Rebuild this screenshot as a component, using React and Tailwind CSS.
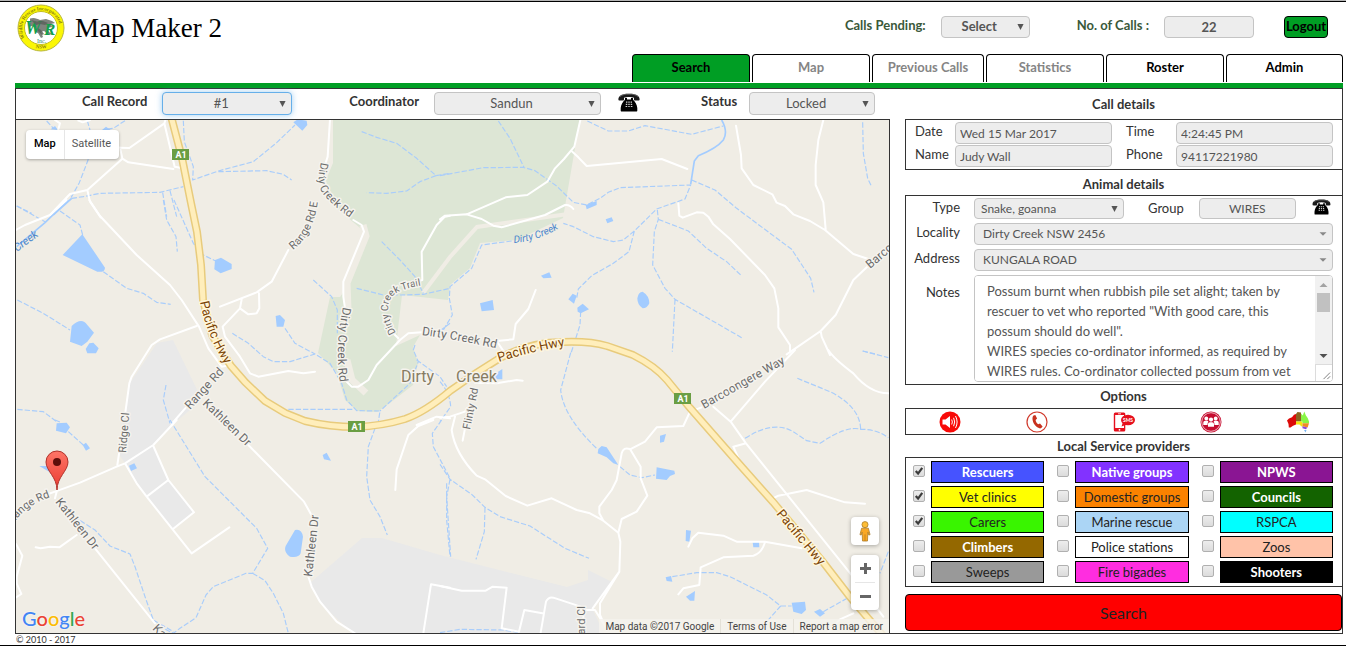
import React from "react";

const fieldBase =
  "rounded border border-[#c4c4c4] bg-[#ededed] text-[#555] outline-none";

function Picker({ id, label, value, wrapClass, textClass, triangle = "fill-[#555]", focused = false, wide = false }) {
  return (
    <div className={`relative ${wrapClass}`}>
      <select
        id={id}
        aria-label={label}
        defaultValue={value}
        className={`block h-full w-full appearance-none rounded border bg-[#ededed] text-[#555] outline-none ${textClass} ${
          focused ? "border-[#66afe9] shadow-[0_0_6px_rgba(102,175,233,0.6)]" : "border-[#c4c4c4]"
        }`}
      >
        <option>{value}</option>
      </select>
      <svg
        viewBox="0 0 8 8"
        preserveAspectRatio="none"
        className={`pointer-events-none absolute top-1/2 -translate-y-1/2 ${wide ? "right-1.5 h-1 w-2" : "right-1.5 h-[7px] w-[7px]"} ${triangle}`}
      >
        <path d="M0.5 0.5h7L4 7.5z" />
      </svg>
    </div>
  );
}

function PhoneIcon({ className }) {
  return (
    <svg viewBox="0 0 22 19" className={className} aria-hidden="true">
      <path d="M.4 6.6C.2 3.4 2.500.7 11 .7s10.800 2.700 10.600 5.900c0 .8-.4 1-1.200 1h-3.200c-.8 0-1.200-.3-1.200-1V4.800c-1.400-.6-3-.8-5-.8s-3.600.2-5 .8v1.800c0 .7-.4 1-1.200 1H1.600c-.8 0-1.200-.2-1.200-1z" fill="#1a1a1a" />
      <path d="M2 3.600C4.500 1.500 7 1.200 11 1.200s6.500.3 9 2.400" fill="none" stroke="#8b8b8b" strokeWidth=".6" />
      <path d="M7 5h2v1.600h4V5h2v1.800c2 1.700 4 4.600 4.300 8.200v2.400c0 .7-.3 1-1 1H3.700c-.7 0-1-.3-1-1V15C3 11.400 5 8.500 7 6.800z" fill="#000" />
      <g fill="#cfcfcf">
        <path d="M8 8.500h1.400v1.200H8zM10.300 8.500h1.400v1.200h-1.400zM12.600 8.500H14v1.200h-1.400zM7.800 10.700h1.500v1.200H7.800zM10.300 10.700h1.400v1.200h-1.400zM12.700 10.700h1.500v1.200h-1.500zM7.600 12.900h1.600v1.200H7.600zM10.300 12.900h1.400v1.200h-1.400zM12.800 12.900h1.600v1.200h-1.600z" />
      </g>
    </svg>
  );
}

function Logo() {
  return (
    <svg viewBox="0 0 48 48" className="h-12 w-12" role="img" aria-label="Wildlife Rescue Incorporated NSW">
      <defs>
        <path id="ringTop" d="M7.500 34A18.800 18.800 0 1 1 40.500 34" />
        <path id="ringBottom" d="M14 42A21 21 0 0 0 34 42" />
      </defs>
      <circle cx="24" cy="24" r="23" fill="#fbf705" stroke="#b9b73c" strokeWidth="1" />
      <circle cx="24" cy="24" r="16.500" fill="#fff" stroke="#c4bf1b" strokeWidth="1" />
      <g fill="#8b8210" fontFamily="Liberation Serif, serif" fontSize="5" fontWeight="bold">
        <text><textPath href="#ringTop">Wildlife Rescue Incorporated</textPath></text>
        <text><textPath href="#ringBottom" startOffset="5">NSW</textPath></text>
      </g>
      <path d="M13 14.500c4-1.500 7 0 10 1.500l6-1 6 2 3 2-4 1 1 3-5 1 2 4 3 2-3 1-5-4-3 1 2 5-2 1-3-5-3-1 1-4-4-2-3 1 1-3z" fill="#70766f" opacity=".9" />
      <g fill="#12a04c" fontFamily="Liberation Serif, serif" fontWeight="bold" fontStyle="italic">
        <text x="8" y="30" fontSize="18">W</text>
        <text x="27" y="31" fontSize="17">R</text>
      </g>
      <path d="M14 16l6 1.500 6-.5 5 2-3 2-5-1-4 1zM21 24l3 2 3 4-2 1-4-4z" fill="#5b625b" opacity=".85" />
      <text x="20" y="39" fontSize="6" fill="#2f8a67" fontFamily="Liberation Serif, serif">Inc.</text>
    </svg>
  );
}

/* Map geometry: tiles drawn on a 3x grid, each placed at its own origin. */
const tiles = [
  {
    at: "translate(0 0) scale(0.33333)",
    roads:
      "M175 388L180 370L165 360M270 360L248 367L235 362M357 443L388 444L493 370L497 358M493 370L524 500L541 503M360 443L367 476L385 487L520 507M367 476L262 570L210 582L150 645M262 570L270 605L302 652M990 358L983 470L976 492",
    creeks:
      "M140 363L160 385M262 362L270 390M375 362L340 385L318 388M265 478L238 548L212 595M215 595L250 590L300 580L480 577L550 560M488 578L500 650M510 572L530 650M550 362L553 425L580 500L578 540L655 513L760 485L830 428L885 375M655 515L800 512L850 523L875 540M1085 395L1130 412L1190 430L1250 475L1308 527L1350 520M1308 527L1260 545L1220 573L1160 580L1100 578M50 618L95 640",
    rivers: "M215 595L160 645",
    water: "M880 367L893 358L920 362L922 375L907 392zM306 390L318 380L332 390zM152 388L165 378L174 390z",
  },
  {
    at: "translate(0 200) scale(0.33333)",
    roads:
      "M268 0L300 48L410 165L510 255L545 300L597 380L625 445L665 500L690 495M48 90L75 75L150 45L200 0M590 378L480 418L455 435L395 530L388 550L375 645M660 320L770 277L815 245L865 150M725 298L720 325L745 343L770 340L778 325L777 280M720 325L668 380L675 410L720 470L750 520L775 530L865 513L910 520L945 515M1060 60L1085 75L1092 95L1030 245L1030 290L1035 325M1035 540L1055 560L1075 560L1105 540L1130 495L1200 420L1225 400L1265 397M1350 47L1335 50L1310 75L1265 155L1267 240L1250 245M1170 390L1195 415M515 672L560 620M1250 675L1310 650L1350 655",
    creeks:
      "M50 18L135 65M180 33L240 75L248 105M310 215L380 265L430 280L470 307L512 313M52 300L130 340L210 390M490 0L500 60L528 110L532 155M522 0L580 130L610 165L645 182M940 240L995 290L1012 330L1012 400M697 400L745 430L790 470L820 485L870 485L945 462L990 490L1025 550L1040 600L1070 632L1140 633L1135 665M855 385L885 430L945 462M865 628L1060 628M1145 125L1200 180L1245 230L1270 280M1070 265L1150 285L1200 285L1270 283L1350 265M1245 435L1240 450L1255 485L1230 550L1140 633M1250 480L1320 530L1340 560M1350 370L1310 400M52 628L130 635L170 665M498 555L490 600L510 670",
    rivers: "M205 0L135 68L50 140",
    water:
      "M247 103L188 165L292 215Q315 218 315 203zM643 208L645 180L663 173L695 192L695 207L662 220zM827 348L840 345L855 360L850 380L830 380zM215 378Q245 350 262 375L282 398L262 425L245 438L210 425zM257 447L268 430L280 428L296 445L288 460L262 460z",
  },
  {
    at: "translate(0 420) scale(0.33333)",
    roads:
      "M530 0L460 75L375 130L350 140L240 188L165 215L145 222M375 130L410 190L440 230L575 400L688 322M460 78L505 180L582 277L518 328M505 180L440 230M352 135L358 95M170 215L165 235M285 385L465 610M230 345L178 382L150 380L122 385L107 382M48 372L67 407L50 470L50 490L64 522L48 532M745 75L912 245L937 290M925 470L935 500L960 545L1010 605L1065 640M1300 0L1255 18L1225 45L1190 148L1186 210M1270 640L1293 493L1350 503",
    creeks:
      "M510 0L615 170L770 325L803 385L758 460L738 460L640 500L618 525L588 593L540 625L520 640L490 625M758 460L795 482L820 520L850 580L865 640M222 290L285 330L330 378L390 402L405 440L435 530L460 600L520 635M1125 25L1105 80L1100 170L1110 240L1140 290L1162 345M1325 0L1297 40L1300 80L1350 175M1340 190L1340 300L1350 410M205 35L250 75M165 0L185 8",
    rivers: "",
    water:
      "M170 10L200 8L210 22L198 40L168 32zM248 75L258 68L270 85L258 92zM118 138L140 138L152 158zM387 137L403 130L411 145L393 153zM968 105L980 98L993 122L972 118zM885 330Q905 325 909 350L902 400Q895 415 870 410Q850 395 857 378z",
  },
  {
    at: "translate(440 85) scale(0.33333)",
    roads:
      "M421 105L403 185L372 222L345 250L322 290L262 330L197 337L80 388L15 392L0 403M80 388L125 402L160 422L185 427L315 390L375 360Q390 358 400 372M397 200L415 217L440 243L665 222L742 252M888 122L903 210L905 250L940 300L997 328L1010 353L1035 363L1060 388L1110 408L1155 435L1240 507L1285 522M1150 105L1135 165L1127 240L1127 300L1150 352L1157 433M715 355L718 392L728 398L770 382L790 383L805 395L820 418L870 462L975 570L1003 610L1015 670L1015 727L1050 780L1050 800M1040 808L1142 738L1187 690L1240 585L1285 542M1142 738L1145 755L1170 810M287 615L265 672L227 717L220 763L170 768L195 805",
    creeks:
      "M175 108L210 160L252 247M0 272L130 248L250 247L285 257L350 303L400 352L440 360L480 340L505 322L540 308L752 300L735 342L650 372L583 438L550 465L520 470L460 455L400 425L370 415M583 438L567 500L520 535L455 572L415 612L410 640M422 680L420 720L392 808M652 375L655 403L643 440L638 540L675 610L705 643L905 758M655 403L745 438L800 490L860 530L902 570M705 643L697 800M755 285L825 315L890 370L1055 493L1112 580L1122 622M442 108L505 138L565 138L615 122L755 148L850 123M1268 112L1270 205L1283 280L1295 305M215 468L125 480L95 550L30 605L28 640L37 690L10 735M1268 798L1310 808",
    rivers: "M845 105Q865 140 850 165Q830 190 775 212L763 228L752 298",
    water:
      "M437 360L470 348L470 360L440 373zM497 403L515 397L520 408L502 415zM303 572L328 562L335 578L310 580zM120 655L158 645L162 675L125 679zM385 643L398 626L410 632L402 656zM412 668L428 656L447 673L422 685L413 680zM592 640Q595 620 608 620Q628 632 628 655Q622 670 608 670Q592 660 592 640z",
  },
  {
    at: "translate(440 350) scale(0.33333)",
    roads:
      "M105 80L105 98L170 100L230 90L248 92M68 272L75 235M0 203L30 200L75 185L80 175M45 200L35 240Q45 310 110 377L135 388L197 438L262 467L335 445L410 480L450 490L490 512L535 548L541 575L538 665L480 760L480 795L500 840M538 665L458 775M490 512L478 490L478 470L515 420L530 390L545 310Q550 290 570 297L602 350L602 385L622 437L590 485L545 507L535 548M570 298L615 275L650 232L730 228L750 185L785 172M430 810L430 780L422 770L340 743Q325 740 318 755L302 848M0 708L65 722L137 722L158 710L200 713L185 835L237 845L253 780L307 790M430 780L465 780L490 820M820 170L872 215L918 280L1232 672L1330 800M872 215L975 95L1065 0M1165 0Q1180 25 1240 70Q1290 130 1345 130M918 280L880 290L902 340M990 450L1015 437L1100 420L1215 457L1275 461M745 590L757 565L775 548L850 557L890 575L975 575L1085 595M975 577Q965 610 940 617L850 622L782 652L778 705L730 715L715 733M1165 845L1200 808L1240 790",
    creeks:
      "M392 8L362 120Q370 200 470 295M540 350L570 375L605 383L645 375M0 343L30 388L95 433L135 472L180 500L270 528L375 595L447 625M30 388L20 440L32 620M135 472L133 545L108 628M915 265Q1000 210 1060 245L1100 272L1140 280Q1220 225 1262 238Q1310 237 1345 263M1072 85L1170 125Q1260 170 1262 238M1268 3L1345 23M697 680L770 668L830 668L870 680L980 735L1022 768L985 810M1022 768L1055 768M1150 785L1230 740M1345 605L1320 670M0 848L60 838L190 840L240 848M0 95Q30 130 32 170L0 215",
    rivers: "",
    water:
      "M485 288L500 292L535 345L520 340L500 322L473 310L475 297zM660 257L678 252L672 275L660 278zM650 352L680 358L703 362L705 372L690 378L680 390L648 386zM738 540L753 542L748 575L737 573zM938 577L957 577L958 592L940 592zM677 682L693 678L697 695L680 693zM738 740L765 723L763 752L750 752zM1055 758L1095 755L1098 780L1085 792L1060 785zM1122 785L1140 777L1155 790L1140 800zM160 75L187 57L187 88L165 88z",
  },
];

const highway =
  "M170 112L172 120L182 158L191 203L197 232L201 265L203 300L212 335L222 352L231 366L245 382L265 401L285 413L305 421Q330 427 356 427Q382 426 405 419Q425 412 450 391L473 375L500 358Q530 342 563 342Q590 341 607 346L633 355Q655 366 667 380L690 408L740 465L773 502L823 562L850 597L885 638";

const roadLabels = [
  ["M321 162Q315 185 324 195Q337 210 358 223", "Dirty Creek Rd", 11],
  ["M293 250Q314 234 318 200", "Range Rd E", 11],
  ["M343 307Q334 350 341 390", "Dirty Creek Rd", 12],
  ["M396 333Q380 305 396 293Q405 288 424 285", "Dirty Creek Trail", 10],
  ["M422 335Q460 340 504 350", "Dirty Creek Rd", 12],
  ["M190 410L230 366", "Range Rd", 12],
  ["M202 404L254 454", "Kathleen Dr", 12],
  ["M126 453L130 405", "Ridge Cl", 11],
  ["M13 524Q28 502 58 495", "Range Rd", 11],
  ["M55 502L101 560", "Kathleen Dr", 12],
  ["M312 577L320 505", "Kathleen Dr", 12],
  ["M152 629L190 667", "Kathleen Dr", 12],
  ["M470 430L480 380", "Flinty Rd", 11],
  ["M704 409L796 357", "Barcoongere Way", 12],
  ["M870 269L930 218", "Barcoongere Way", 12],
  ["M585 644L585 590", "Ward Cl", 11],
];

const highwayLabels = ["M200 302Q207 338 231 374", "M499 362Q535 350 572 345", "M776 514L826 574"];

const shields = [
  [172, 149],
  [348, 421],
  [674, 393],
];

function MapDrawing() {
  return (
    <svg
      viewBox="16 120 873 513"
      preserveAspectRatio="xMidYMid slice"
      className="absolute inset-0 h-full w-full"
      role="img"
      aria-label="Road map of Dirty Creek"
      fontFamily="Roboto, sans-serif"
    >
      <rect x="0" y="100" width="900" height="560" fill="#f0ede5" />
      <path
        d="M333 118L333 163L326 180L331 203L353 222L366 233L364 247L350 283L340 297L330 297L318 353L337 373L345 400L357 411L377 412L390 403L413 385L418 363L413 347L420 335L396 346L402 295L448 300L450 285L470 268L480 243L517 240L563 218L575 148L580 118z"
        fill="#dde6d5"
      />
      <path d="M363 225L366 236L347 283L348 310M347 360L352 380L366 393" fill="none" stroke="#f0ede5" strokeWidth="7" />
      <path d="M423 293L450 257L477 227L568 214" fill="none" stroke="#f0ede5" strokeWidth="4" />
      <path
        d="M157 343L173 340L202 400L172 425L153 445L168 480L194 512L172 529L146 497L125 463L118 453L130 383zM310 583L362 538L382 538L440 555L567 587L588 580L588 570L612 582L592 608L607 640L360 640L333 615L318 600z"
        fill="#e9e9e9"
      />
      {tiles.map((t) => (
        <g key={t.at} transform={t.at} fill="none" strokeLinejoin="round">
          <path d={t.creeks} stroke="#a9cdfb" strokeWidth="3.500" strokeDasharray="16 6" />
          <path d={t.rivers} stroke="#a3ccff" strokeWidth="5" />
          <path d={t.water} fill="#a3ccff" />
          <path d={t.roads} stroke="#fff" strokeWidth="6" strokeLinecap="round" />
        </g>
      ))}
      <path d={highway} fill="none" stroke="#e8cb7c" strokeWidth="8" />
      <path d={highway} fill="none" stroke="#ffeebb" strokeWidth="5" />
      {shields.map(([x, y]) => (
        <g key={x}>
          <rect x={x} y={y} width="17" height="11" fill="#6a9e43" />
          <text x={x + 9} y={y + 9} fontSize="9" fontWeight="bold" fill="#fff" textAnchor="middle">A1</text>
        </g>
      ))}
      <g stroke="#f5f3ee" strokeWidth="3" strokeLinejoin="round" style={{ paintOrder: "stroke" }}>
        {roadLabels.map(([d, name, size], i) => (
          <React.Fragment key={i}>
            <path id={`road${i}`} d={d} fill="none" stroke="none" />
            <text fontSize={size} fill="#6b6b6b"><textPath href={`#road${i}`}>{name}</textPath></text>
          </React.Fragment>
        ))}
        {highwayLabels.map((d, i) => (
          <React.Fragment key={i}>
            <path id={`hwy${i}`} d={d} fill="none" stroke="none" />
            <text fontSize="13" fill="#7b4405" stroke="#fff6dc"><textPath href={`#hwy${i}`}>Pacific Hwy</textPath></text>
          </React.Fragment>
        ))}
        <path id="creekEast" d="M514 243Q540 241 566 224" fill="none" stroke="none" />
        <text fontSize="10" fontStyle="italic" fill="#4a86cc" stroke="none"><textPath href="#creekEast">Dirty Creek</textPath></text>
        <path id="creekWest" d="M17 252L53 225" fill="none" stroke="none" />
        <text fontSize="11" fontStyle="italic" fill="#4a86cc" stroke="none"><textPath href="#creekWest">Creek</textPath></text>
        <text y="382" fontSize="16" fill="#877c62"><tspan x="401">Dirty</tspan><tspan x="456">Creek</tspan></text>
      </g>
      <defs>
        <linearGradient id="pin" x1="0" y1="0" x2="0" y2="1">
          <stop offset="0" stopColor="#fd7567" />
          <stop offset="1" stopColor="#ea3b30" />
        </linearGradient>
      </defs>
      <path d="M57 490C57 477 46 471 46 462A11 11 0 0 1 68 462C68 471 57 477 57 490z" fill="url(#pin)" stroke="#b0322a" strokeWidth="1" />
      <circle cx="57" cy="462" r="4" fill="#5d0e0a" />
    </svg>
  );
}

function MapPanel() {
  return (
    <div className="relative min-h-[400px] flex-1 overflow-hidden border-r border-[#333] bg-[#f0ede5]" style={{ fontFamily: "Roboto, sans-serif" }}>
      <MapDrawing />
      <div className="absolute left-2.5 top-2.5 flex h-[29px] rounded-sm bg-white text-[11px] shadow-[0_1px_3px_rgba(0,0,0,0.3)]">
        <button type="button" className="border-r border-[#e6e6e6] px-2 font-medium text-black">Map</button>
        <button type="button" className="pl-[7px] pr-2 text-[#565656]">Satellite</button>
      </div>
      <div className="absolute bottom-[23px] right-2.5 flex flex-col gap-2.5">
        <button type="button" aria-label="Street View" className="flex h-7 w-7 items-center justify-center rounded-sm bg-white shadow-[0_1px_4px_rgba(0,0,0,0.3)]">
          <svg viewBox="0 0 14 22" className="h-[21px] w-3.5">
            <circle cx="7" cy="3.800" r="3.200" fill="#fdbd35" stroke="#a87b2a" strokeWidth=".8" />
            <path d="M3.500 7.500h7l1.800 6.800-1.300.4-1-3-.4 9.300H4.400L4 11.700l-1 3-1.300-.4z" fill="#f9a825" stroke="#a87b2a" strokeWidth=".8" />
            <path d="M7 14v7" stroke="#b9791a" strokeWidth=".8" />
          </svg>
        </button>
        <div className="flex w-7 flex-col items-stretch rounded-sm bg-white px-1 shadow-[0_1px_4px_rgba(0,0,0,0.3)]">
          <button type="button" aria-label="Zoom in" className="flex h-7 items-center justify-center border-b border-[#e6e6e6]">
            <svg viewBox="0 0 11 11" className="h-[11px] w-[11px]"><path d="M4 0h3v4h4v3H7v4H4V7H0V4h4z" fill="#666" /></svg>
          </button>
          <button type="button" aria-label="Zoom out" className="flex h-[27px] items-center justify-center">
            <svg viewBox="0 0 11 11" className="h-[11px] w-[11px]"><path d="M0 4h11v3H0z" fill="#666" /></svg>
          </button>
        </div>
      </div>
      <div className="absolute bottom-0.5 left-1.5 text-[20px] font-medium leading-[26px] [text-shadow:0_0_2px_#fff]" style={{ fontFamily: "Lato, sans-serif" }}>
        <span className="text-[#4285f4]">G</span>
        <span className="text-[#ea4335]">o</span>
        <span className="text-[#fbbc05]">o</span>
        <span className="text-[#4285f4]">g</span>
        <span className="text-[#34a853]">l</span>
        <span className="text-[#ea4335]">e</span>
      </div>
      <div className="absolute bottom-0 right-0 flex h-3.5 items-center divide-x divide-[#e4e1d8] bg-[#f5f3ee]/80 text-[10px] text-[#444]">
        <span className="px-1.5">Map data ©2017 Google</span>
        <a href="#terms" className="px-1.5">Terms of Use</a>
        <a href="#report" className="px-1.5">Report a map error</a>
      </div>
    </div>
  );
}

const tabs = [
  ["Search", "w-[118px] bg-[#009e24] text-black"],
  ["Map", "w-[118px] text-[#858585]"],
  ["Previous Calls", "w-[112px] text-[#858585]"],
  ["Statistics", "w-[118px] text-[#858585]"],
  ["Roster", "w-[118px] text-black"],
  ["Admin", "w-[117px] text-black"],
];

const providers = [
  ["Rescuers", true, "bg-[#4653ff] text-white font-bold"],
  ["Native groups", false, "bg-[#8232ff] text-white font-bold"],
  ["NPWS", false, "bg-[#8a1593] text-white font-bold"],
  ["Vet clinics", true, "bg-[#ffff00] text-[#222]"],
  ["Domestic groups", false, "bg-[#fb8200] text-[#222]"],
  ["Councils", false, "bg-[#136300] text-white font-bold"],
  ["Carers", true, "bg-[#39f500] text-[#222]"],
  ["Marine rescue", false, "bg-[#abd5f5] text-[#222]"],
  ["RSPCA", false, "bg-[#00ffff] text-[#222]"],
  ["Climbers", false, "bg-[#946800] text-white font-bold"],
  ["Police stations", false, "bg-white text-[#222]"],
  ["Zoos", false, "bg-[#ffc3a9] text-[#222]"],
  ["Sweeps", false, "bg-[#999999] text-[#222]"],
  ["Fire bigades", false, "bg-[#ff2de0] text-[#222]"],
  ["Shooters", false, "bg-black text-white font-bold"],
];

function Provider({ name, checked, tone }) {
  const id = `provider-${name.replace(" ", "-")}`;
  return (
    <div className="flex items-center gap-1.5">
      <span className="relative mb-0.5 flex h-3 w-3 shrink-0">
        <input
          id={id}
          type="checkbox"
          defaultChecked={checked}
          className="peer h-full w-full appearance-none rounded-[2px] border border-[#b0b0b0] bg-linear-to-b from-[#ededed] to-[#dcdcdc]"
        />
        <svg viewBox="0 0 13 13" className="pointer-events-none absolute inset-0 hidden peer-checked:block">
          <path d="M3 6.500L5.500 9.300L10 3" fill="none" stroke="#3c3c3c" strokeWidth="2.400" />
        </svg>
      </span>
      <label htmlFor={id} className={`h-[22px] flex-1 whitespace-nowrap border border-black text-center leading-5 ${tone}`}>
        {name}
      </label>
    </div>
  );
}

const optionIcons = [
  [
    "Sound alert",
    <>
      <circle cx="11" cy="11" r="10.500" fill="#f80a08" />
      <path d="M3.500 8.500h3L11 5v12l-4.500-3.500h-3z" fill="#fff" />
      <path d="M12.700 8.500q1.300 2.500 0 5M14.600 6.800q2.200 4.200 0 8.400M16.500 5q3.200 6 0 12" fill="none" stroke="#fff" strokeWidth="1" />
    </>,
  ],
  [
    "Call",
    <>
      <circle cx="11" cy="11" r="10" fill="#fff" stroke="#d03a2c" strokeWidth="1.200" />
      <path d="M7.500 4.600l1.800-.6 1.800 3.600-1.500 1.300c.2 1.700 1.200 3.400 2.700 4.400l1.700-.8 2.600 3-1.300 1.500c-1.300 1-3.700.1-6-2.400C6.500 11.500 5.600 6.500 7.500 4.600z" fill="#c8321f" />
    </>,
  ],
  [
    "Send SMS",
    <>
      <rect x=".8" y="1.500" width="11.500" height="19" rx="1.500" fill="#e60f1d" />
      <rect x="2.200" y="4" width="8.800" height="13" fill="#fff" />
      <path d="M5 2.800h3" stroke="#fff" strokeWidth=".8" />
      <circle cx="6.500" cy="18.800" r=".9" fill="#fff" />
      <ellipse cx="15" cy="9" rx="7" ry="5.200" fill="#e60f1d" />
      <path d="M10 11l-1.500 4.500 5.500-2z" fill="#e60f1d" />
      <text x="15" y="10.700" fontSize="5" fontWeight="bold" textAnchor="middle" fill="#fff">SMS</text>
    </>,
  ],
  [
    "Group",
    <>
      <circle cx="11" cy="11" r="10.500" fill="#c50d2f" />
      <circle cx="11" cy="11" r="9.300" fill="none" stroke="#fff" strokeWidth=".7" />
      <g fill="#fff">
        <circle cx="6.300" cy="7.500" r="1.900" />
        <circle cx="15.700" cy="7.500" r="1.900" />
        <path d="M3.300 14v-2.500q0-1.700 2-1.700h2q1 0 1 1-.8.800-.8 3.200zM18.700 14v-2.500q0-1.700-2-1.700h-2q-1 0-1 1 .8.800.8 3.200z" />
        <circle cx="11" cy="8.600" r="2.100" />
        <path d="M8 15.800v-2.800q0-1.700 2-1.700h2q2 0 2 1.700v2.800z" />
      </g>
    </>,
  ],
  [
    "States",
    <>
      <path d="M0 9.500l2-2 3-1.200 2-2.600 2-.7v10.500l-3 1.200-2.500 1.800H1.800L1.500 13z" fill="#dc0a08" />
      <path d="M9 3l1.500-2L14 1.500V10.500H9z" fill="#8a6420" />
      <path d="M9 10.500h6.500v5.500l-1.500-1-1.500-1.500H9z" fill="#f5e710" />
      <path d="M14 2.500l1.800 2L17.300.5l1.500 3.800 2 3 1.200 3.200v1.700h-6.500V10.500H14z" fill="#89f545" />
      <path d="M15.500 12.200H22l-1.300 4.300-5.200-1.200z" fill="#f08a24" />
      <path d="M15.500 15.300l4.800 1.200-1.300 1.700-3.500-1z" fill="#8b45d8" />
      <path d="M17 19h2.500l-1 2.500z" fill="#79b5f2" />
    </>,
  ],
];

function Heading({ children, className }) {
  return <h2 className={`flex items-center justify-center text-[13px] font-bold text-[#333] ${className}`}>{children}</h2>;
}

function DetailField({ id, label, value, labelClass }) {
  return (
    <>
      <label htmlFor={id} className={labelClass}>{label}</label>
      <input id={id} defaultValue={value} className={`h-[22px] min-w-0 px-1 text-[12px] ${fieldBase}`} />
    </>
  );
}

const notes =
  'Possum burnt when rubbish pile set alight; taken by rescuer to vet who reported "With good care, this possum should do well".\nWIRES species co-ordinator informed, as required by WIRES rules. Co-ordinator collected possum from vet';

export default function App() {
  return (
    <div
      className="flex min-h-screen flex-col border-b border-black bg-white text-[13px] text-[#333]"
      style={{ fontFamily: "Lato, 'Open Sans', sans-serif" }}
    >
      <div className="h-0.5 border-b border-black bg-[#b5b5b5]" />
      <header className="flex justify-between pl-[17px] pr-[3px]">
        <div className="flex items-start gap-2.5 pt-0.5">
          <Logo />
          <h1 className="pt-1.5 text-[27px] leading-9 text-black" style={{ fontFamily: "'Liberation Serif', serif" }}>Map Maker 2</h1>
        </div>
        <div className="flex flex-col items-end gap-4 pt-3.5">
          <div className="flex h-[22px] items-center pr-[15px] font-bold">
            <label htmlFor="pending" className="mb-0.5 mr-[15px] text-[#3a593a]">Calls Pending:</label>
            <Picker id="pending" value="Select" wrapClass="mr-[47px] h-[22px] w-[89px]" textClass="pl-1 pr-4 text-center font-bold" />
            <label htmlFor="count" className="mb-0.5 mr-[15px] text-[#3a593a]">No. of Calls :</label>
            <input id="count" defaultValue="22" className={`mr-[30px] h-[22px] w-[90px] text-center ${fieldBase}`} />
            <button type="button" className="h-[22px] w-11 rounded border border-black bg-[#009e24] text-black">Logout</button>
          </div>
          <nav className="flex gap-0.5">
            {tabs.map(([name, tone]) => (
              <a key={name} href={`#${name}`} className={`h-7 rounded-t border border-b-0 border-black text-center font-bold leading-6 ${tone}`}>
                {name}
              </a>
            ))}
          </nav>
        </div>
      </header>

      <main className="ml-[15px] mr-[3px] mt-px flex flex-1 flex-col">
        <div className="h-[5px] bg-[#009e24]" />
        <div className="grid flex-1 grid-cols-[2fr_1fr] gap-x-[15px] border border-[#333]">
          <section className="flex flex-col">
            <div className="flex h-[31px] items-center border-b border-[#333] pl-[66px]">
              <label htmlFor="record" className="mb-1 mr-[15px] font-bold">Call Record</label>
              <Picker id="record" label="Call Record" value="#1" focused wrapClass="mb-px mr-[57px] h-[23px] w-[130px]" textClass="pl-1 pr-4 text-center" />
              <label htmlFor="coordinator" className="mb-1 mr-[15px] font-bold">Coordinator</label>
              <Picker id="coordinator" value="Sandun" wrapClass="mb-px mr-[17px] h-[23px] w-[167px]" textClass="pl-1 pr-4 text-center" />
              <button type="button" aria-label="Phone coordinator" className="mb-1 mr-[61px]"><PhoneIcon className="h-[19px] w-[22px]" /></button>
              <label htmlFor="status" className="mb-1 mr-[12px] font-bold">Status</label>
              <Picker id="status" value="Locked" wrapClass="mb-px h-[23px] w-[126px]" textClass="pl-1 pr-4 text-center" />
            </div>
            <MapPanel />
          </section>

          <section className="flex min-w-0 flex-col">
            <Heading className="h-[30px] pt-px">Call details</Heading>
            <div className="grid grid-cols-[40px_1fr_64px_1fr] gap-y-px border-y border-l border-[#333] px-[9px] py-0.5">
              <DetailField id="date" label="Date" value="Wed 15 Mar 2017" />
              <DetailField id="time" label="Time" value="4:24:45 PM" labelClass="pl-3.5" />
              <DetailField id="name" label="Name" value="Judy Wall" />
              <DetailField id="phone" label="Phone" value="94117221980" labelClass="pl-3.5" />
            </div>
            <Heading className="h-[25px] pt-1">Animal details</Heading>
            <div className="grid grid-cols-[54px_1fr] gap-x-3.5 gap-y-1 border-y border-l border-[#333] py-0.5 pr-[9px]">
              <label htmlFor="type" className="text-right">Type</label>
              <div className="flex h-[21px] items-center">
                <Picker id="type" value="Snake, goanna" wrapClass="h-[21px] w-[150px]" textClass="px-1.5 text-[12px]" />
                <label htmlFor="group" className="ml-6 mr-[15px]">Group</label>
                <input id="group" defaultValue="WIRES" className={`h-[21px] w-[97px] text-center text-[12px] ${fieldBase}`} />
                <button type="button" aria-label="Phone group" className="mb-1 ml-auto mr-0.5"><PhoneIcon className="h-4 w-[19px]" /></button>
              </div>
              <label htmlFor="locality" className="text-right">Locality</label>
              <Picker id="locality" value="Dirty Creek NSW 2456" wide triangle="fill-[#888]" wrapClass="h-[22px]" textClass="px-2 text-[12px]" />
              <label htmlFor="address" className="text-right">Address</label>
              <Picker id="address" value="KUNGALA ROAD" wide triangle="fill-[#888]" wrapClass="h-[22px]" textClass="px-2 text-[12px]" />
              <label htmlFor="notes" className="pt-2 text-right">Notes</label>
              <div className="relative h-[107px] overflow-hidden rounded border border-[#c4c4c4]">
                <textarea
                  id="notes"
                  defaultValue={notes}
                  className="block h-full w-full resize-none overflow-hidden bg-white py-[5px] pl-3 pr-[30px] text-[13px] leading-5 text-[#555] outline-none"
                />
                <div aria-hidden="true" className="absolute inset-y-0 right-0 flex w-[17px] flex-col items-center bg-[#f1f1f1]">
                  <svg viewBox="0 0 17 17" className="h-[17px] w-[17px]"><path d="M4.500 11h8l-4-4z" fill="#a3a3a3" /></svg>
                  <div className="h-[19px] w-[13px] bg-[#c1c1c1]" />
                  <svg viewBox="0 0 17 17" className="mt-auto h-[17px] w-[17px]"><path d="M4.500 7h8l-4 4z" fill="#505050" /></svg>
                  <svg viewBox="0 0 17 17" className="h-[17px] w-[17px] border-l border-t border-[#dcdcdc] bg-white"><path d="M8 15l7-7M12 15l3-3" stroke="#777" /></svg>
                </div>
              </div>
            </div>
            <Heading className="h-[23px]">Options</Heading>
            <div className="grid h-[27px] grid-cols-5 border-y border-l border-[#333]">
              {optionIcons.map(([name, icon]) => (
                <button key={name} type="button" aria-label={name} className="flex items-center justify-center">
                  <svg viewBox="0 0 22 22" className="h-[22px] w-[22px]">{icon}</svg>
                </button>
              ))}
            </div>
            <Heading className="h-[22px] pt-0.5">Local Service providers</Heading>
            <div className="grid grid-cols-3 gap-x-[13px] gap-y-[3px] border-y border-l border-[#333] py-[3px] pl-[7px] pr-[9px]">
              {providers.map(([name, checked, tone]) => (
                <Provider key={name} name={name} checked={checked} tone={tone} />
              ))}
            </div>
            <button type="button" className="mb-0.5 mt-[7px] h-[37px] rounded border border-black bg-[#ff0000] text-[16px] text-[#222]">Search</button>
          </section>
        </div>
      </main>
      <footer className="ml-4 text-[9px] leading-[11px] text-[#333]">© 2010 - 2017</footer>
    </div>
  );
}
